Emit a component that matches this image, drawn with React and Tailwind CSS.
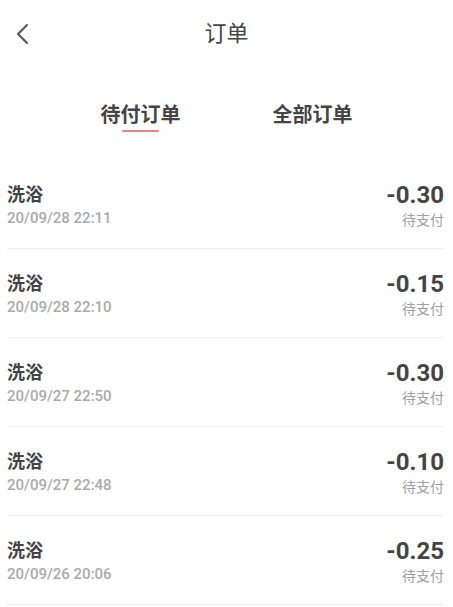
import { useState } from "react";

const orders = [
    { name: "洗浴", time: "20/09/28 22:11", amount: "-0.30" },
    { name: "洗浴", time: "20/09/28 22:10", amount: "-0.15" },
    { name: "洗浴", time: "20/09/27 22:50", amount: "-0.30" },
    { name: "洗浴", time: "20/09/27 22:48", amount: "-0.10" },
    { name: "洗浴", time: "20/09/26 20:06", amount: "-0.25" },
];

export default function App() {
    const [tab, setTab] = useState(0);

    return (
        <div className="min-h-screen bg-white text-[#444] font-['Roboto','Noto_Sans_CJK_SC',sans-serif]">
            <header className="relative h-[68px] flex items-center justify-center">
                <button className="absolute left-[12px] top-[21px] p-[2px]">
                    <svg width="16" height="22" viewBox="0 0 16 22" fill="none">
                        <path d="M13 2 L4 11 L13 20" stroke="#555" strokeWidth="2" strokeLinecap="round" strokeLinejoin="round" />
                    </svg>
                </button>
                <h1 className="text-[22px] leading-none text-[#444]">订单</h1>
            </header>

            <nav className="flex justify-center gap-[92px] pt-[35px] h-[92px]">
                {["待付订单", "全部订单"].map((t, i) => (
                    <button key={t} onClick={() => setTab(i)} className="flex flex-col items-center">
                        <span className="text-[20px] leading-[24px] font-bold text-[#444]">{t}</span>
                        <span className={`mt-[3px] h-[2px] w-[37px] rounded-full ${tab === i ? "bg-[#e9857c]" : "bg-transparent"}`} />
                    </button>
                ))}
            </nav>

            <ul className="px-[7px] pr-[9px]">
                {orders.map((o, i) => (
                    <li key={i} className="h-[89px] flex items-center justify-between border-b border-[#f0f0f0]">
                        <div className="flex flex-col pt-[2px]">
                            <span className="text-[18px] leading-[24px] font-bold text-[#444]">{o.name}</span>
                            <span className="mt-[2px] text-[15px] leading-[18px] font-medium text-[#aaa]">{o.time}</span>
                        </div>
                        <div className="flex flex-col items-end pt-[2px]">
                            <span className="text-[24px] leading-[28px] font-bold text-[#444]">{o.amount}</span>
                            <span className="mt-[2px] text-[14px] leading-[18px] text-[#a0a0a0]">待支付</span>
                        </div>
                    </li>
                ))}
            </ul>
        </div>
    );
}
